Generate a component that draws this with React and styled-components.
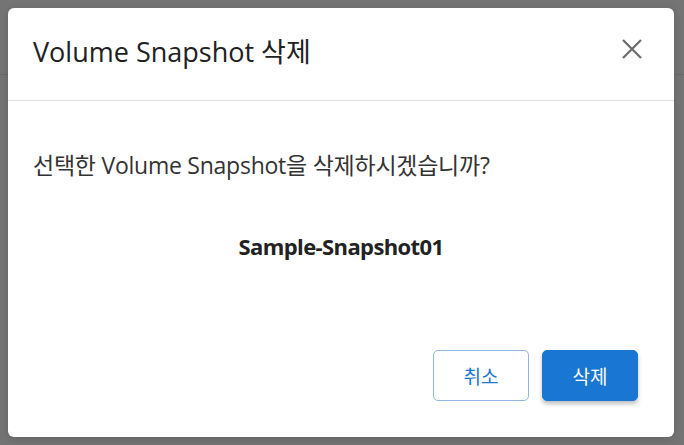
import React from "react";
import styled, { createGlobalStyle } from "styled-components";

const Global = createGlobalStyle`
  html, body { margin: 0; padding: 0; }
  body {
    width: 684px; height: 445px; overflow: hidden;
    background: #747474;
    font-family: "Open Sans", "Noto Sans CJK KR", sans-serif;
  }
`;

const Backdrop = styled.div`
  position: relative;
  width: 684px;
  height: 445px;
  padding: 8px 10px 8px 8px;
  box-sizing: border-box;
  display: flex;
  align-items: flex-start;
  &::before {
    content: "";
    position: absolute;
    left: 0; right: 0; top: 74px;
    height: 1px;
    background: #6a6a6a;
  }
`;

const Dialog = styled.div`
  position: relative;
  z-index: 1;
  width: 666px;
  height: 429px;
  background: #fff;
  border-radius: 6px;
  display: flex;
  flex-direction: column;
  box-shadow: 0 2px 10px rgba(0,0,0,0.15);
`;

const Header = styled.div`
  height: 93px;
  box-sizing: border-box;
  border-bottom: 1px solid #e0e0e0;
  display: flex;
  align-items: center;
  justify-content: space-between;
  padding: 0 31px 8px 25px;
`;

const Title = styled.h2`
  margin: 0;
  font-size: 27px;
  font-weight: 400;
  color: #212121;
  letter-spacing: 0;
`;

const CloseButton = styled.button`
  border: none;
  background: none;
  padding: 0;
  width: 22px;
  height: 22px;
  display: flex;
  align-items: center;
  justify-content: center;
  color: #6b6b6b;
  cursor: pointer;
  margin-top: -2px;
`;

const Body = styled.div`
  flex: 1;
  padding: 46px 25px 0;
  display: flex;
  flex-direction: column;
`;

const Message = styled.p`
  margin: 0;
  font-size: 23px;
  font-weight: 400;
  color: #333;
  letter-spacing: -0.25px;
`;

const Name = styled.p`
  margin: 50px 0 0;
  text-align: center;
  font-size: 22px;
  font-weight: 700;
  color: #222;
  letter-spacing: -0.6px;
`;

const Footer = styled.div`
  display: flex;
  justify-content: flex-end;
  gap: 13px;
  padding: 0 36px 36px 0;
`;

const Button = styled.button`
  width: 96px;
  height: 51px;
  border-radius: 5px;
  font-family: "Noto Sans CJK KR", sans-serif;
  font-size: 19px;
  cursor: pointer;
  border: 1px solid ${p => (p.$primary ? "#1976d2" : "#8fb7e3")};
  background: ${p => (p.$primary ? "#1976d2" : "#fff")};
  color: ${p => (p.$primary ? "#fff" : "#1976d2")};
  box-shadow: ${p => (p.$primary ? "0 3px 4px rgba(0,0,0,0.25)" : "none")};
`;

export default function App() {
  return (
    <>
      <Global />
      <Backdrop>
        <Dialog>
          <Header>
            <Title>Volume Snapshot 삭제</Title>
            <CloseButton aria-label="close">
              <svg width="20" height="20" viewBox="0 0 20 20">
                <path d="M1 1 L19 19 M19 1 L1 19" stroke="currentColor" strokeWidth="2.2" />
              </svg>
            </CloseButton>
          </Header>
          <Body>
            <Message>선택한 Volume Snapshot을 삭제하시겠습니까?</Message>
            <Name>Sample-Snapshot01</Name>
          </Body>
          <Footer>
            <Button>취소</Button>
            <Button $primary>삭제</Button>
          </Footer>
        </Dialog>
      </Backdrop>
    </>
  );
}
